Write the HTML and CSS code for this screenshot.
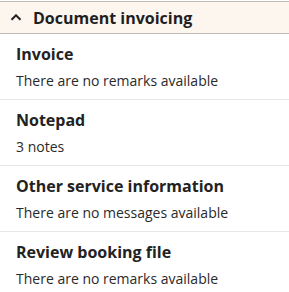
FILE: index.html
```html
<!DOCTYPE html>
<html>
<head>
<meta charset="utf-8">
<link rel="stylesheet" href="styles.css">
</head>
<body>
<section class="panel">
  <header class="panel-header">
    <svg class="chevron" width="12" height="8" viewBox="0 0 12 8"><path d="M1.5 5.8 L6 1.3 L10.5 5.8" fill="none" stroke="#222" stroke-width="2"/></svg>
    <span class="panel-title">Document invoicing</span>
  </header>
  <div class="item">
    <div class="item-title">Invoice</div>
    <div class="item-sub">There are no remarks available</div>
  </div>
  <div class="item">
    <div class="item-title">Notepad</div>
    <div class="item-sub">3 notes</div>
  </div>
  <div class="item">
    <div class="item-title">Other service information</div>
    <div class="item-sub">There are no messages available</div>
  </div>
  <div class="item last">
    <div class="item-title">Review booking file</div>
    <div class="item-sub">There are no remarks available</div>
  </div>
</section>
</body>
</html>
```
FILE: styles.css
```css
html, body {
  margin: 0;
  padding: 0;
  background: #fff;
}
body {
  font-family: "Open Sans", "Noto Sans", sans-serif;
  color: #222;
}
.panel {
  width: 289px;
  padding-top: 1px;
}
.panel-header {
  display: flex;
  align-items: center;
  gap: 11px;
  height: 31px;
  padding: 0 0 0 10px;
  background: #fdf6ef;
  border-top: 1px solid #c2bbb5;
  border-bottom: 1px solid #c2bbb5;
}
.chevron {
  display: block;
}
.panel-title {
  font-size: 16px;
  font-weight: 700;
  color: #1f1f1f;
}
.item {
  padding: 8px 16px 7px;
  border-bottom: 1px solid #e6e6e6;
}
.item.last {
  border-bottom: none;
}
.item-title {
  font-size: 16px;
  font-weight: 700;
  line-height: 24px;
  color: #222;
}
.item-sub {
  font-size: 14px;
  line-height: 22px;
  margin-top: 4px;
  color: #2a2a2a;
}
```
